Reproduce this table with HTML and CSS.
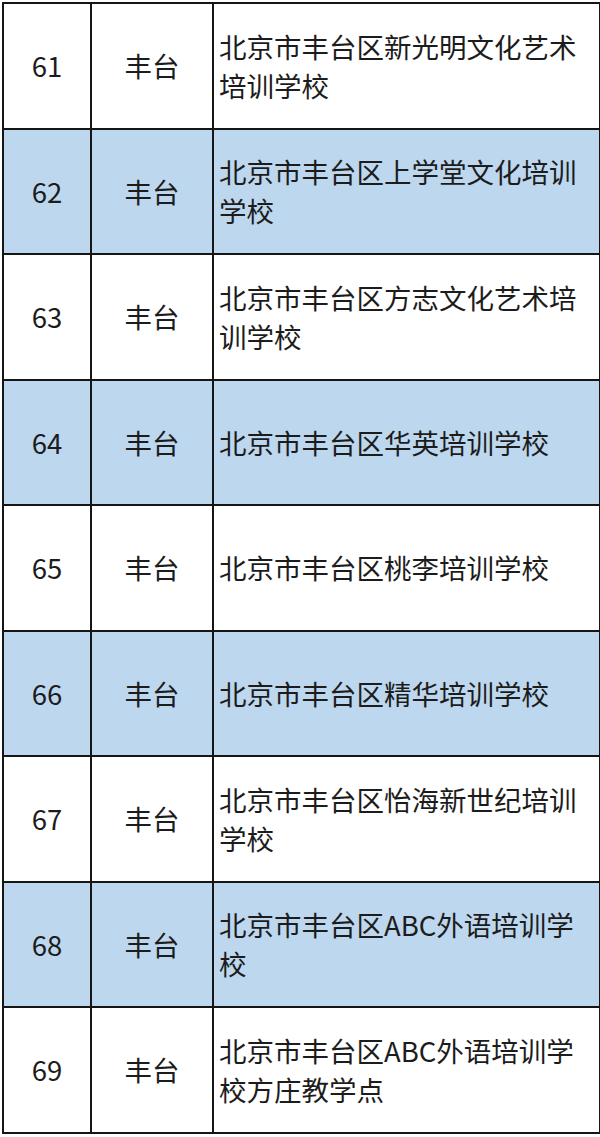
FILE: index.html
```html
<!DOCTYPE html>
<html lang="zh-CN">
<head>
<meta charset="utf-8">
<title>丰台区培训学校</title>
<link rel="stylesheet" href="styles.css">
</head>
<body>
<table class="list">
  <colgroup>
    <col class="c-num">
    <col class="c-area">
    <col class="c-name">
  </colgroup>
  <tbody>
    <tr><td class="num">61</td><td class="area">丰台</td><td class="name">北京市丰台区新光明文化艺术培训学校</td></tr>
    <tr class="alt"><td class="num">62</td><td class="area">丰台</td><td class="name">北京市丰台区上学堂文化培训学校</td></tr>
    <tr><td class="num">63</td><td class="area">丰台</td><td class="name">北京市丰台区方志文化艺术培训学校</td></tr>
    <tr class="alt"><td class="num">64</td><td class="area">丰台</td><td class="name">北京市丰台区华英培训学校</td></tr>
    <tr><td class="num">65</td><td class="area">丰台</td><td class="name">北京市丰台区桃李培训学校</td></tr>
    <tr class="alt"><td class="num">66</td><td class="area">丰台</td><td class="name">北京市丰台区精华培训学校</td></tr>
    <tr><td class="num">67</td><td class="area">丰台</td><td class="name">北京市丰台区怡海新世纪培训学校</td></tr>
    <tr class="alt"><td class="num">68</td><td class="area">丰台</td><td class="name">北京市丰台区ABC外语培训学校</td></tr>
    <tr><td class="num">69</td><td class="area">丰台</td><td class="name">北京市丰台区ABC外语培训学校方庄教学点</td></tr>
  </tbody>
</table>
</body>
</html>
```
FILE: styles.css
```css
html, body {
  margin: 0;
  padding: 0;
  background: #ffffff;
}

body {
  padding: 2px 0 0 2px;
  font-family: "Noto Sans CJK SC", "Noto Sans", sans-serif;
  color: #1c1c1c;
}

.list {
  border-collapse: collapse;
  table-layout: fixed;
  width: 597px;
}

.c-num { width: 88px; }
.c-area { width: 122px; }
.c-name { width: 387px; }

.list td {
  border: 2px solid #151515;
  height: 123.5px;
  padding: 0;
  font-size: 27.5px;
  line-height: 39px;
  vertical-align: middle;
}

.list .num,
.list .area {
  text-align: center;
}

.list .name {
  padding: 0 10px 0 5px;
  text-align: left;
  word-break: break-all;
}

.list tr.alt td {
  background: #bdd7ee;
}
```
